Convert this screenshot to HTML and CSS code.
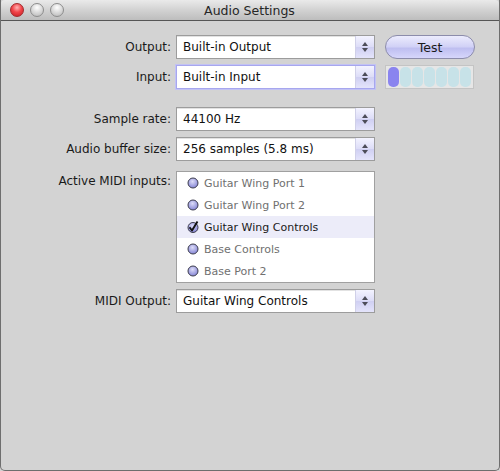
FILE: index.html
```html
<!DOCTYPE html>
<html>
<head>
<meta charset="utf-8">
<link rel="stylesheet" href="styles.css">
</head>
<body>
<div class="window">
  <div class="titlebar">
    <div class="lights">
      <span class="light red"></span>
      <span class="light gray"></span>
      <span class="light gray"></span>
    </div>
    <div class="title">Audio Settings</div>
  </div>
  <div class="content">
    <div class="row r1">
      <div class="label">Output:</div>
      <div class="select"><span class="val">Built-in Output</span><span class="stepper"><i class="up"></i><i class="down"></i></span></div>
      <div class="button">Test</div>
    </div>
    <div class="row r2">
      <div class="label">Input:</div>
      <div class="select focus"><span class="val">Built-in Input</span><span class="stepper"><i class="up"></i><i class="down"></i></span></div>
      <div class="meter"><span class="seg on"></span><span class="seg"></span><span class="seg"></span><span class="seg"></span><span class="seg"></span><span class="seg"></span><span class="seg"></span></div>
    </div>
    <div class="row r3">
      <div class="label">Sample rate:</div>
      <div class="select"><span class="val">44100 Hz</span><span class="stepper"><i class="up"></i><i class="down"></i></span></div>
    </div>
    <div class="row r4">
      <div class="label">Audio buffer size:</div>
      <div class="select"><span class="val">256 samples (5.8 ms)</span><span class="stepper"><i class="up"></i><i class="down"></i></span></div>
    </div>
    <div class="row r5">
      <div class="label top">Active MIDI inputs:</div>
      <div class="list">
        <div class="item"><svg class="radio" viewBox="0 0 12 12"><defs><radialGradient id="g1" cx="0.45" cy="0.35" r="0.7"><stop offset="0" stop-color="#dcdcf8"/><stop offset="1" stop-color="#7d7dd2"/></radialGradient></defs><circle cx="6" cy="6" r="5" fill="url(#g1)" stroke="#3c3c4c" stroke-width="1"/></svg><span>Guitar Wing Port 1</span></div>
        <div class="item"><svg class="radio" viewBox="0 0 12 12"><circle cx="6" cy="6" r="5" fill="url(#g1)" stroke="#3c3c4c" stroke-width="1"/></svg><span>Guitar Wing Port 2</span></div>
        <div class="item sel"><svg class="radio" viewBox="0 0 12 12"><circle cx="6" cy="6.5" r="5" fill="url(#g1)" stroke="#3c3c4c" stroke-width="1"/><path d="M2.5 6.2 L5 9.5 L10.5 0.5" fill="none" stroke="#111" stroke-width="1.9" stroke-linejoin="round"/></svg><span>Guitar Wing Controls</span></div>
        <div class="item"><svg class="radio" viewBox="0 0 12 12"><circle cx="6" cy="6" r="5" fill="url(#g1)" stroke="#3c3c4c" stroke-width="1"/></svg><span>Base Controls</span></div>
        <div class="item"><svg class="radio" viewBox="0 0 12 12"><circle cx="6" cy="6" r="5" fill="url(#g1)" stroke="#3c3c4c" stroke-width="1"/></svg><span>Base Port 2</span></div>
      </div>
    </div>
    <div class="row r6">
      <div class="label">MIDI Output:</div>
      <div class="select"><span class="val">Guitar Wing Controls</span><span class="stepper"><i class="up"></i><i class="down"></i></span></div>
    </div>
  </div>
</div>
</body>
</html>
```
FILE: styles.css
```css
* { box-sizing: border-box; }
html, body { margin: 0; padding: 0; }
body {
  width: 500px;
  height: 471px;
  background: #d3d3d3;
  font-family: "DejaVu Sans", "Liberation Sans", sans-serif;
  color: #1a1a1a;
  overflow: hidden;
}
.window {
  width: 500px;
  height: 471px;
  background: #d3d3d3;
  border: 1px solid #6e6e6e;
  border-top: none;
  border-radius: 0 0 5px 5px;
  display: flex;
  flex-direction: column;
}
.titlebar {
  height: 21px;
  background: linear-gradient(#eaeaea, #d2d2d2 50%, #bdbdbd);
  border-bottom: 1px solid #565656;
  display: flex;
  align-items: center;
  border-radius: 4px 4px 0 0;
}
.lights {
  display: flex;
  gap: 6px;
  padding-left: 9px;
}
.light {
  width: 14px;
  height: 14px;
  border-radius: 50%;
  display: block;
}
.light.red {
  background: radial-gradient(circle at 50% 30%, #ffb3b3 0, #f2454a 45%, #c51c21 100%);
  border: 1px solid #a22a2c;
}
.light.gray {
  background: radial-gradient(circle at 50% 30%, #ffffff 0, #dcdcdc 45%, #b4b4b4 100%);
  border: 1px solid #8d8d8d;
}
.title {
  flex: 1;
  text-align: center;
  font-size: 12.5px;
  color: #262626;
  margin-right: 64px;
  padding-top: 1px;
}
.content {
  display: flex;
  flex-direction: column;
}
.row {
  display: grid;
  grid-template-columns: 170px 199px 95px;
  column-gap: 5px;
  align-items: center;
}
.row > :nth-child(3) { margin-left: 5px; }
.r1 { margin-top: 14px; }
.r2 { margin-top: 6px; }
.r3 { margin-top: 18px; }
.r4 { margin-top: 6px; }
.r5 { margin-top: 10px; align-items: start; }
.r6 { margin-top: 6px; }
.label {
  text-align: right;
  font-size: 12px;
  color: #1a1a1a;
}
.label.top { padding-top: 3px; }
.select {
  height: 24px;
  background: #fff;
  border: 1px solid #9c9c9c;
  display: flex;
  align-items: center;
  font-size: 12px;
  box-shadow: inset 0 1px 0 #e2e2e2;
}
.select.focus {
  border: 1px solid #a7a7ee;
  box-shadow: 0 0 0 1px #c2c2f4;
}
.val {
  flex: 1;
  padding-left: 6px;
  color: #111;
}
.stepper {
  width: 19px;
  height: 100%;
  background: linear-gradient(#f3f3ff, #dcdcf7 50%, #cfcff2 51%, #e4e4fb);
  border-left: 1px solid #d0d0e8;
  display: flex;
  flex-direction: column;
  align-items: center;
  justify-content: center;
  gap: 2px;
}
.up, .down {
  display: block;
  width: 0;
  height: 0;
  border-left: 3px solid transparent;
  border-right: 3px solid transparent;
}
.up { border-bottom: 4px solid #4c4c58; }
.down { border-top: 4px solid #4c4c58; }
.button {
  height: 24px;
  border-radius: 12px;
  border: 1px solid #8c8cab;
  background: linear-gradient(#ececfd, #d0d0f6 50%, #bebef0 55%, #d6d6fb);
  font-size: 12.5px;
  display: flex;
  align-items: center;
  justify-content: center;
  color: #1a1a1a;
}
.meter {
  height: 24px;
  width: 89px;
  border: 1px solid #c4c4c4;
  background: #e6e6e6;
  display: flex;
  align-items: center;
  padding: 0 2px;
  gap: 1px;
}
.seg {
  width: 11px;
  height: 20px;
  border-radius: 5px;
  background: #c7e2e8;
  display: block;
}
.seg.on { background: #8a84ef; }
.list {
  height: 112px;
  background: #fff;
  border: 1px solid #a0a0a0;
  display: flex;
  flex-direction: column;
}
.item {
  height: 22px;
  display: flex;
  align-items: center;
  font-size: 11px;
  color: #707070;
  padding-left: 10px;
  gap: 5px;
}
.item.sel {
  background: #ececf9;
  color: #1a1a1a;
}
.radio {
  width: 12px;
  height: 12px;
  display: block;
}
```
